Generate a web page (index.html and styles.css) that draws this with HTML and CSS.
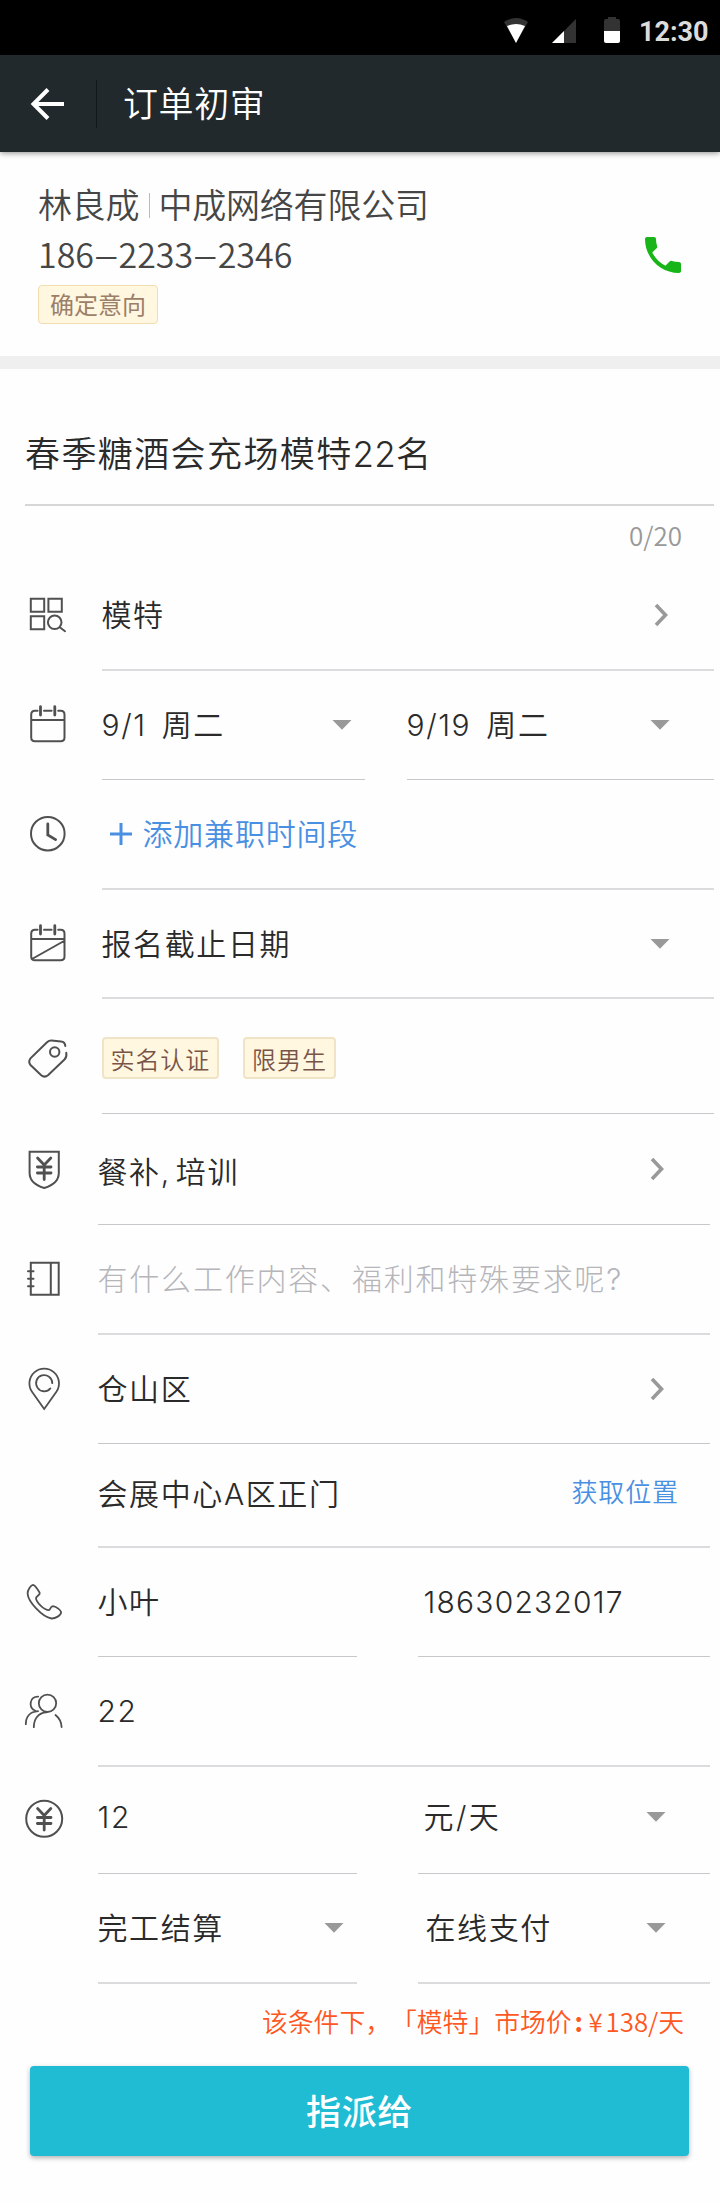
FILE: index.html
```html
<!DOCTYPE html>
<html lang="zh-CN">
<head>
<meta charset="utf-8">
<title>订单初审</title>
<link rel="stylesheet" href="styles.css">
</head>
<body>
<svg class="defs" width="0" height="0">
  <symbol id="chevron" viewBox="0 0 16 24"><path d="M2 2 L11.5 12 L2 22" fill="none" stroke="#999" stroke-width="3.6"/></symbol>
  <symbol id="caret" viewBox="0 0 20 10"><path d="M0.5 0 H19.5 L10 9.8 Z" fill="#999"/></symbol>
  <symbol id="yen" viewBox="0 0 40 40"><path d="M13.6 8 L20.2 15 L26.8 8 M20.2 15 V29.5 M13.4 17 H27 M13.4 23 H27"/></symbol>
</svg>

<header class="status">
  <svg class="status-icons" width="120" height="28" viewBox="0 0 120 28">
    <path d="M0 6 Q12 -2 24 6 L12 27 Z" fill="#333"/>
    <path d="M3 10 Q12 6 21 10 L12 27 Z" fill="#fff"/>
    <path d="M72 3 V27 H48 Z" fill="#333"/>
    <path d="M60 15 V27 H48 Z" fill="#fff"/>
    <path d="M104 1 h8 v2 h2 a2 2 0 0 1 2 2 V15 H100 V5 a2 2 0 0 1 2 -2 h2 Z" fill="#333"/>
    <path d="M100 15 H116 V25 a2 2 0 0 1 -2 2 H102 a2 2 0 0 1 -2 -2 Z" fill="#fff"/>
  </svg>
  <span class="clock">12:30</span>
</header>

<nav class="appbar">
  <svg class="back" width="40" height="40" viewBox="0 0 40 40"><path d="M20 5.5 L5.5 20 L20 34.5 M6 20 H36" fill="none" stroke="#fff" stroke-width="4"/></svg>
  <span class="appbar-rule"></span>
  <h1 class="appbar-title">订单初审</h1>
</nav>

<section class="contact">
  <div class="contact-info">
    <div class="contact-name">林良成<span class="name-rule"></span>中成网络有限公司</div>
    <div class="contact-phone">186<span class="dash">–</span>2233<span class="dash">–</span>2346</div>
    <span class="tag tag-contact">确定意向</span>
  </div>
  <svg class="call" width="48" height="48" viewBox="0 0 24 24"><path fill="#17b517" d="M6.62 10.79c1.44 2.83 3.76 5.14 6.59 6.59l2.2-2.2c.27-.27.67-.36 1.02-.24 1.12.37 2.33.57 3.57.57.55 0 1 .45 1 1V20c0 .55-.45 1-1 1-9.39 0-17-7.61-17-17 0-.55.45-1 1-1h3.5c.55 0 1 .45 1 1 0 1.25.2 2.45.57 3.57.11.35.03.74-.25 1.02l-2.2 2.2z"/></svg>
</section>

<main class="form">
  <div class="title-field">春季糖酒会充场模特<span class="title-num">22</span>名</div>
  <div class="counter">0/20</div>

  <div class="group group-a">
    <div class="row r-job">
      <svg class="icon" viewBox="0 0 40 40"><path d="M2.8 2.8 h13.4 v13 h-13.4z M20.4 2.8 h13.4 v13 h-13.4z M2.8 20.3 h13.4 v13 h-13.4z M31.8 31.3 L37 35.2"/><circle cx="26.7" cy="26.3" r="6.8"/></svg>
      <div class="field soft"><span>模特</span><svg class="chevron"><use href="#chevron"/></svg></div>
    </div>
    <div class="row r-dates">
      <svg class="icon" viewBox="0 0 40 40"><path d="M9.6 4.8 H7 Q3.2 4.8 3.2 8.8 V31.5 Q3.2 35.2 7 35.2 H32.7 Q36.5 35.2 36.5 31.5 V8.8 Q36.5 4.8 32.7 4.8 H30.2 M16 4.8 H23.6 M3.2 14 H36.5"/><path class="thick" d="M12.5 0.7 V9 M26.8 0.7 V9"/></svg>
      <div class="field"><span>9/1 周二</span><svg class="caret"><use href="#caret"/></svg></div>
      <div class="field"><span>9/19 周二</span><svg class="caret"><use href="#caret"/></svg></div>
    </div>
    <div class="row r-add">
      <svg class="icon" viewBox="0 0 40 40"><circle cx="19.8" cy="18.7" r="16.8"/><path class="thick" d="M19.8 9 V20 L27.6 24.6"/></svg>
      <div class="field soft link"><svg class="plus" width="24" height="24" viewBox="0 0 24 24"><path d="M12 1 V23 M1 12 H23" fill="none" stroke="#4a90e2" stroke-width="3"/></svg><span>添加兼职时间段</span></div>
    </div>
    <div class="row r-deadline">
      <svg class="icon" viewBox="0 0 40 40"><path d="M9.6 4.8 H7 Q3.2 4.8 3.2 8.8 V31.5 Q3.2 35.2 7 35.2 H32.7 Q36.5 35.2 36.5 31.5 V8.8 Q36.5 4.8 32.7 4.8 H30.2 M16 4.8 H23.6 M3.2 14 H36.5 M4 34 L36 16"/><path class="thick" d="M12.5 0.7 V9 M26.8 0.7 V9"/></svg>
      <div class="field soft"><span>报名截止日期</span><svg class="caret"><use href="#caret"/></svg></div>
    </div>
    <div class="row r-tags">
      <svg class="icon" viewBox="0 0 40 40"><path d="M37.3 9 Q37 4.8 33 4.4 L23.5 3.6 Q21 3.5 19 5.3 L2.5 21.3 Q0 25 2.5 28 L13.2 38.3 Q16.5 41 20 38.3 L36.5 22.5 Q39 20 38.3 15.8"/><circle cx="26.7" cy="15" r="4.7"/></svg>
      <div class="field tags"><span class="tag">实名认证</span><span class="tag">限男生</span></div>
    </div>
  </div>

  <div class="group group-b">
    <div class="row r-benefit">
      <svg class="icon" viewBox="0 0 40 40"><path d="M5.6 1.8 H34.8 V23 Q34.8 33.5 20.2 38 Q5.6 33.5 5.6 23 Z"/><use class="thick" href="#yen" width="40" height="40"/></svg>
      <div class="field low"><span>餐补, 培训</span><svg class="chevron"><use href="#chevron"/></svg></div>
    </div>
    <div class="row r-desc">
      <svg class="icon" viewBox="0 0 40 40"><path d="M6.8 2.7 H34.7 V34.7 H6.8 Z M26.8 2.7 V34.7 M4 11.2 H9.5 M4 18.8 H9.5 M4 26.3 H9.5"/></svg>
      <div class="field soft placeholder"><span>有什么工作内容、福利和特殊要求呢?</span></div>
    </div>
    <div class="row r-area">
      <svg class="icon" viewBox="0 0 40 40"><path class="thin" d="M20.2 39 L8 21.8 A14.8 14.8 0 1 1 32.4 21.8 Z M28.3 13.2 A8.1 8.1 0 1 0 26.4 18.4"/></svg>
      <div class="field"><span>仓山区</span><svg class="chevron"><use href="#chevron"/></svg></div>
    </div>
    <div class="row r-address">
      <div class="field soft"><span>会展中心A区正门</span><a class="locate">获取位置</a></div>
    </div>
    <div class="row r-contact">
      <svg class="icon" viewBox="0 0 40 40"><path class="thin" d="M9 1.8 C11 1.8 13.5 6 15.7 9.8 C16.5 12 12.5 13 12 15 C12 19 20 27 25 27.2 C26.5 26.8 26.5 23 29 23.2 C33 24 36.4 27 37.1 29 C37.3 32.5 31 35.7 27.5 35.5 C18 34 4 18.5 3.6 10.5 C3.5 7 6.8 2 9 1.8Z"/></svg>
      <div class="field"><span>小叶</span></div>
      <div class="field"><span class="mobile">18630232017</span></div>
    </div>
    <div class="row r-count">
      <svg class="icon" viewBox="0 0 40 40"><path class="thin" d="M14.2 4.6 C5.5 4.4 4 15.5 11.3 18.8 M14 19.2 C6 19.8 1.8 25 1.8 32.2 M22.5 20.3 C14 20.5 9.8 27.5 9.8 35.2 M31.5 23 Q37.2 27.5 37.6 35"/><circle class="thin" cx="23.5" cy="11.3" r="8.7"/></svg>
      <div class="field soft"><span>22</span></div>
    </div>
    <div class="row r-wage">
      <svg class="icon" viewBox="0 0 40 40"><circle cx="20.2" cy="19.8" r="18"/><use class="thick" href="#yen" width="40" height="40" y="1.5"/></svg>
      <div class="field"><span>12</span></div>
      <div class="field"><span class="unit">元/天</span><svg class="caret"><use href="#caret"/></svg></div>
    </div>
    <div class="row r-pay">
      <div class="field soft"><span>完工结算</span><svg class="caret"><use href="#caret"/></svg></div>
      <div class="field soft"><span>在线支付</span><svg class="caret"><use href="#caret"/></svg></div>
    </div>
  </div>

  <p class="hint">该条件下，「模特」市场价<span class="colon">:</span><span class="yen">¥</span>138/天</p>
  <button class="submit" type="button">指派给</button>
</main>
</body>
</html>
```

FILE: styles.css
```css
* { box-sizing: border-box; }

body {
  margin: 0;
  width: 720px;
  height: 2203px;
  background: #fefefe;
  color: #2a2a2a;
  font-family: "Noto Sans CJK SC", sans-serif;
}

.defs { position: absolute; }

/* Status bar */
.status {
  display: flex;
  justify-content: flex-end;
  height: 55px;
  padding: 16px 12px 0 0;
  background: #000;
}
.status-icons { margin-right: 15px; }
.clock {
  width: 69px;
  font: bold 27px/32px Roboto, sans-serif;
  color: #dcdcdc;
}

/* App bar */
.appbar {
  position: relative;
  display: flex;
  align-items: center;
  height: 97px;
  padding-left: 28px;
  background: #22292c;
  box-shadow: 0 1px 6px rgba(0, 0, 0, .45);
}
.appbar-rule {
  width: 1px;
  height: 48px;
  margin: 0 26px 0 28px;
  background: #12171a;
}
.appbar-title {
  margin: 0;
  padding-bottom: 3px;
  font-size: 35px;
  font-weight: 350;
  line-height: 50px;
  letter-spacing: .6px;
  color: #fff;
}

/* Contact */
.contact {
  display: flex;
  justify-content: space-between;
  height: 217px;
  padding: 27px 33px 0 38px;
  border-bottom: 13px solid #efefef;
}
.contact-name,
.contact-phone {
  font-size: 34px;
  font-weight: 350;
  line-height: 50px;
  color: #464646;
  white-space: nowrap;
}
.contact-name { letter-spacing: -.2px; }
.name-rule {
  display: inline-block;
  width: 1px;
  height: 25px;
  margin: 0 8px 0 10px;
  background: #bbb;
}
.dash {
  display: inline-block;
  width: 24.5px;
  text-align: center;
  transform: scaleX(1.35);
}
.call { margin-top: 52px; }

.tag {
  display: block;
  width: fit-content;
  height: 42px;
  padding: 0 7px;
  border: 2px solid #f1e3c6;
  border-radius: 4px;
  background: #fff7e0;
  font-size: 24px;
  line-height: 39px;
  letter-spacing: .9px;
  color: #795548;
}
.tag-contact {
  height: 39px;
  margin-top: 6px;
  padding: 0 11px;
  border-width: 1px;
  border-color: #f3dcae;
  line-height: 36px;
  letter-spacing: 0;
  color: #9c7f68;
}

/* Form */
.title-field {
  height: 137px;
  margin: 0 6px 0 25px;
  padding-top: 60px;
  border-bottom: 2px solid #d6d6d6;
  font-family: Inter, "Noto Sans CJK SC", sans-serif;
  font-weight: 350;
  font-size: 35px;
  line-height: 50px;
  letter-spacing: 1.4px;
}
.title-num { letter-spacing: .2px; }
.counter {
  height: 54px;
  padding: 11px 38px 0 0;
  font-weight: 350;
  font-size: 26px;
  line-height: 36px;
  text-align: right;
  color: #999;
}

.row { display: flex; height: 110px; }
.group-a .row { padding: 0 6px 0 28px; gap: 42px; }
.group-b .row { padding: 0 10px 0 23.5px; gap: 61px; }

.icon {
  flex: none;
  align-self: center;
  width: 40px;
  height: 40px;
  overflow: visible;
  fill: none;
  stroke: #505050;
  stroke-width: 2;
  stroke-linecap: round;
}
.icon .thick { stroke-width: 2.8; }
.icon .thin { stroke-width: 1.8; }
.group-a .icon { margin-right: -8.5px; }
.group-b .icon { margin-right: -27px; }

.field {
  display: flex;
  flex: 1;
  align-items: center;
  justify-content: space-between;
  border-bottom: 1px solid #c8c8cc;
  font-family: Inter, "Noto Sans CJK SC", sans-serif;
  font-weight: 350;
  font-size: 30px;
  line-height: 40px;
  letter-spacing: 1.6px;
  white-space: nowrap;
}
.field.soft { border-bottom: 2px solid #dcdcde; }
.group-a .field { padding-right: 44px; }
.group-b .field { padding-right: 44px; }
.low span { padding-top: 6px; word-spacing: -5px; }

.caret { width: 20px; height: 10px; }
.chevron { width: 16px; height: 24px; }

.r-job { height: 111px; }
.r-dates { height: 109px; }
.r-dates .field { word-spacing: 5px; }
.r-dates .field:nth-of-type(1) { flex: 0 0 263px; padding-right: 13px; }
.field.link { justify-content: flex-start; gap: 10px; padding-left: 7px; color: #4a90e2; letter-spacing: .8px; }
.r-deadline { height: 109px; }
.r-tags { height: 115px; }
.field.tags { justify-content: flex-start; gap: 24px; padding-top: 3px; }
.field.tags .tag { font-family: "Noto Sans CJK SC", sans-serif; }

.r-benefit { height: 111px; }
.placeholder { color: #b5b5ba; font-weight: 300; letter-spacing: 1.8px; }
.r-area { height: 109px; }
.group-b .r-address { height: 104px; padding-left: 97.5px; }
.r-address .field { padding: 0 31px 2px 0; }
.locate { padding-bottom: 2px; color: #4a90e2; font-size: 26px; letter-spacing: .9px; }
.r-contact { height: 109px; }
.r-contact .field:nth-of-type(1),
.r-wage .field:nth-of-type(1),
.r-pay .field:nth-of-type(1) { flex: 0 0 259px; padding-right: 13px; }
.r-contact .field:nth-of-type(2),
.r-wage .field:nth-of-type(2) { padding-left: 6px; }
.mobile { letter-spacing: 1.2px; }
.unit { letter-spacing: 2.4px; }
.r-pay .field:nth-of-type(2) { padding-left: 8px; }
.r-wage { height: 107px; }
.r-wage .field { padding-bottom: 6px; }
.r-wage .icon { position: relative; top: -2px; }
.group-b .r-pay { padding-left: 97.5px; }

.hint {
  display: flex;
  justify-content: flex-end;
  margin: 0;
  height: 82px;
  padding: 18px 36px 0 0;
  font-size: 25.8px;
  font-weight: 350;
  line-height: 38px;
  text-spacing-trim: space-all;
  color: #ff5722;
}
.colon { width: 14px; font-weight: 700; text-align: center; }
.yen { width: 20px; text-align: center; }

.submit {
  display: block;
  width: 659px;
  height: 90px;
  margin: 0 0 0 30px;
  padding: 0 0 4px;
  border: 0;
  border-radius: 4px;
  background: #1fbcd4;
  box-shadow: 0 2px 5px rgba(0, 0, 0, .3);
  color: #fff;
  font-family: "Noto Sans CJK SC", sans-serif;
  font-size: 35px;
  font-weight: 500;
  letter-spacing: .6px;
}
```
